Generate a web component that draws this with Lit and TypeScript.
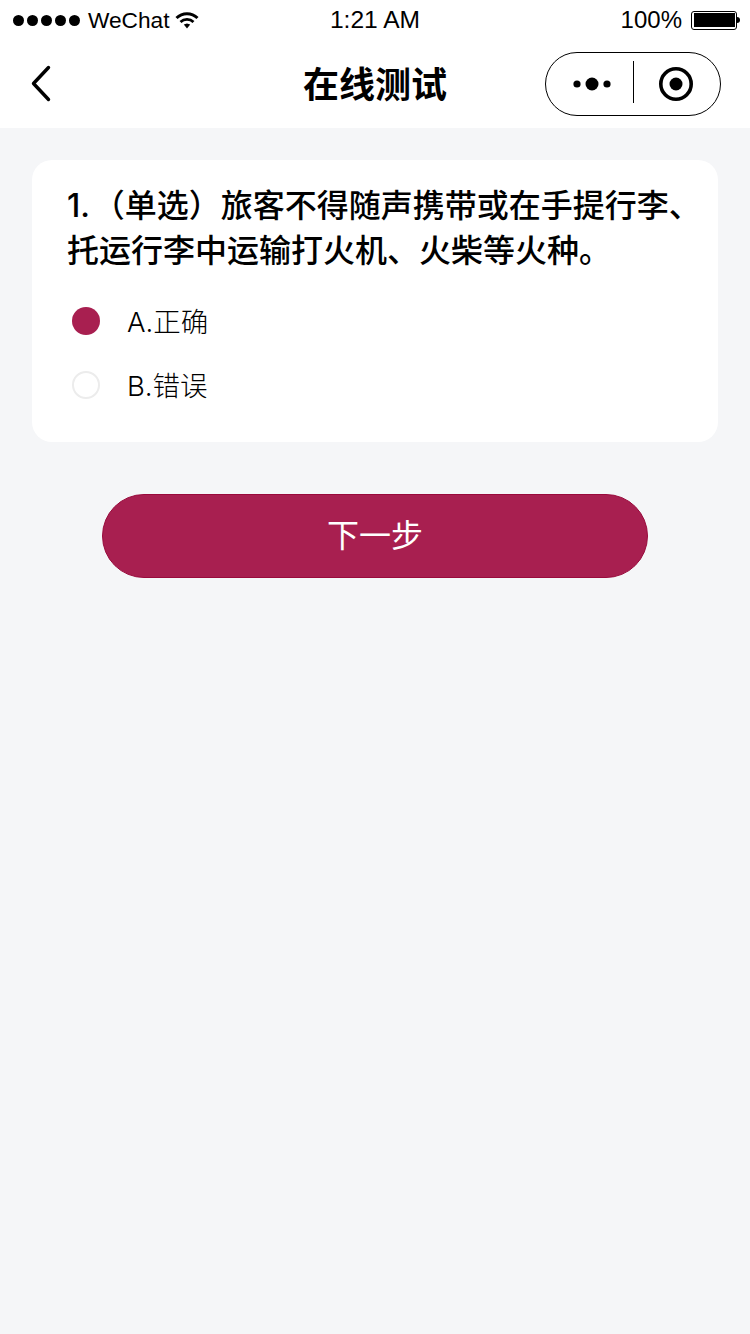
import { css, html, LitElement } from "lit";
import { customElement } from "lit/decorators.js";

@customElement("app-root")
class AppRoot extends LitElement {
  static styles = css`
    :host {
      display: block;
      width: 750px;
      height: 1334px;
      background: #f5f6f8;
      font-family: "Liberation Sans", "Noto Sans CJK SC", sans-serif;
      color: #000;
      overflow: hidden;
    }
    .status {
      display: grid;
      grid-template-columns: 1fr auto 1fr;
      align-items: center;
      height: 40px;
      background: #fff;
      font-size: 24px;
    }
    .left, .right {
      display: flex;
      align-items: center;
    }
    .left {
      padding-left: 13px;
    }
    .dots {
      display: flex;
      gap: 3px;
      margin-right: 8px;
    }
    .dots i {
      width: 11px;
      height: 11px;
      border-radius: 50%;
      background: #000;
    }
    .carrier {
      font-size: 22.7px;
    }
    .clock {
      font-size: 24.6px;
    }
    .wifi {
      margin-left: 5px;
    }
    .right {
      justify-content: flex-end;
      padding-right: 10px;
    }
    .battery {
      display: flex;
      align-items: center;
      margin-left: 9px;
    }
    .battery .shell {
      width: 46px;
      height: 19px;
      box-sizing: border-box;
      border: 1.5px solid #000;
      border-radius: 3px;
      padding: 1.5px;
    }
    .battery .fill {
      display: block;
      height: 100%;
      background: #000;
    }
    .battery .tip {
      width: 3px;
      height: 6px;
      background: #000;
      border-radius: 0 3px 3px 0;
    }
    .nav {
      position: relative;
      display: flex;
      align-items: center;
      justify-content: space-between;
      height: 88px;
      padding: 0 29px 0 28px;
      background: #fff;
    }
    .title {
      position: absolute;
      left: 0;
      right: 0;
      top: -2px;
      text-align: center;
      font-family: "Noto Sans CJK SC", sans-serif;
      font-size: 36px;
      font-weight: 700;
      line-height: 88px;
    }
    .back {
      display: block;
    }
    .capsule {
      display: flex;
      align-items: center;
      box-sizing: border-box;
      width: 176px;
      height: 64px;
      border: 1px solid #000;
      border-radius: 32px;
    }
    .capsule .half {
      display: flex;
      align-items: center;
      justify-content: center;
      box-sizing: border-box;
    }
    .capsule .half.more {
      flex: 0 0 87px;
      padding-left: 4px;
    }
    .capsule .half.target {
      flex: 0 0 86px;
      padding-right: 2px;
      padding-bottom: 1px;
    }
    .capsule .sep {
      width: 1px;
      height: 42px;
      margin-bottom: 4px;
      background: #000;
    }
    .card {
      margin: 32px 32px 0;
      padding: 23px 10px 0 35px;
      height: 282px;
      box-sizing: border-box;
      background: #fff;
      border-radius: 20px;
    }
    .question {
      font-family: Inter, "Noto Sans CJK SC", sans-serif;
      font-size: 32px;
      font-weight: 500;
      line-height: 45px;
      margin: 0;
    }
    .options {
      display: flex;
      flex-direction: column;
      gap: 24px;
      margin-top: 28px;
    }
    .option {
      display: flex;
      align-items: center;
      height: 40px;
      padding-left: 5px;
      gap: 27px;
      font-family: Inter, "Noto Sans CJK SC", sans-serif;
      font-size: 27.5px;
      font-weight: 300;
    }
    .option .label {
      padding-bottom: 2px;
    }
    .radio {
      width: 28px;
      height: 28px;
      box-sizing: border-box;
      border-radius: 50%;
      border: 2px solid #ececec;
    }
    .radio.on {
      background: #a81f50;
      border: none;
    }
    .next {
      display: flex;
      align-items: center;
      justify-content: center;
      box-sizing: border-box;
      width: 546px;
      height: 84px;
      margin: 52px auto 0;
      padding-bottom: 7px;
      border: 1px solid #990a3c;
      border-radius: 42px;
      background: #a81f50;
      color: #fff;
      font-family: "Noto Sans CJK SC", sans-serif;
      font-size: 32px;
      font-weight: 400;
    }
  `;

  render() {
    return html`
      <div class="status">
        <div class="left">
          <span class="dots"><i></i><i></i><i></i><i></i><i></i></span>
          <span class="carrier">WeChat</span>
          <svg class="wifi" width="24" height="18" viewBox="0 0 24 18">
            <path d="M1.5 7a15 15 0 0 1 21 0" fill="none" stroke="#000" stroke-width="3" />
            <path d="M5.5 11a9.5 9.5 0 0 1 13 0" fill="none" stroke="#000" stroke-width="2.8" />
            <path d="M8.8 13.6l3.2-1.2 3.2 1.2-3.2 4z" fill="#000" />
          </svg>
        </div>
        <div class="clock">1:21 AM</div>
        <div class="right">
          <span>100%</span>
          <span class="battery"><span class="shell"><span class="fill"></span></span><span class="tip"></span></span>
        </div>
      </div>
      <div class="nav">
        <svg class="back" width="24" height="38" viewBox="0 0 24 38">
          <path d="M20.5 2.5 5.5 18.5 20.5 34.5" fill="none" stroke="#000" stroke-width="3.4" stroke-linecap="round" stroke-linejoin="round" />
        </svg>
        <div class="title">在线测试</div>
        <div class="capsule">
          <div class="half more">
            <svg width="38" height="14" viewBox="0 0 38 14">
              <circle cx="4" cy="7" r="3.6" /><circle cx="19" cy="7" r="6.5" /><circle cx="34" cy="7" r="3.6" />
            </svg>
          </div>
          <div class="sep"></div>
          <div class="half target">
            <svg width="36" height="36" viewBox="0 0 36 36">
              <circle cx="18" cy="18" r="15.2" fill="none" stroke="#000" stroke-width="3.6" />
              <circle cx="18" cy="18" r="6.5" />
            </svg>
          </div>
        </div>
      </div>
      <div class="card">
        <p class="question">1.&#8202;（单选）旅客不得随声携带或在手提行李、托运行李中运输打火机、火柴等火种。</p>
        <div class="options">
          <div class="option"><span class="radio on"></span><span class="label">A.正确</span></div>
          <div class="option"><span class="radio"></span><span class="label">B.错误</span></div>
        </div>
      </div>
      <div class="next">下一步</div>
    `;
  }
}
